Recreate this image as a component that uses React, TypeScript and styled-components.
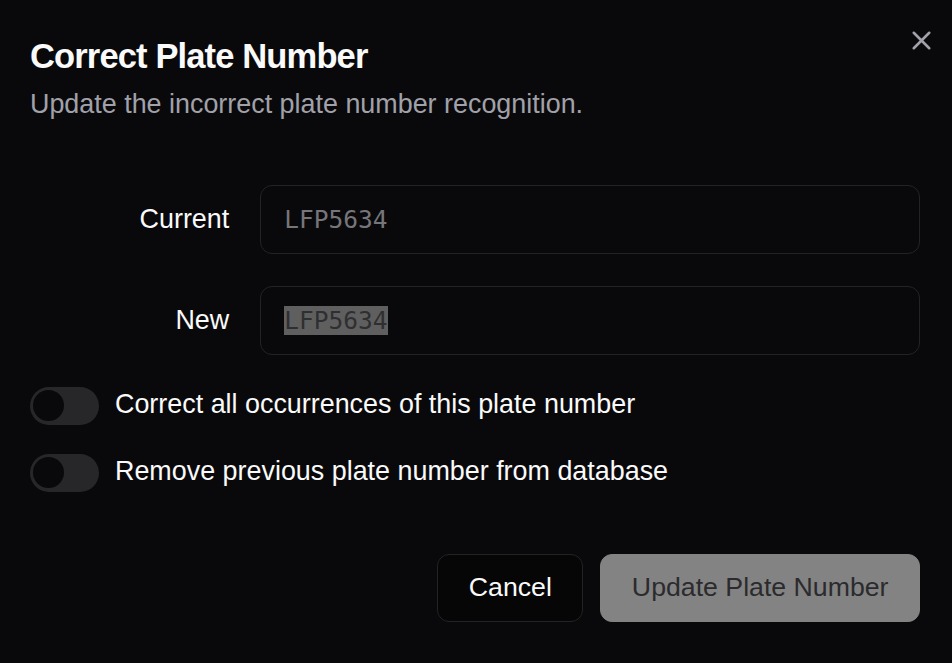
import { useEffect, useRef } from "react";
import styled, { createGlobalStyle } from "styled-components";
import { X } from "lucide-react";

const GlobalStyle = createGlobalStyle`
  html, body {
    margin: 0;
    padding: 0;
    background: #09090b;
  }
  body {
    font-family: "Liberation Sans", Arial, sans-serif;
    color: #fafafa;
  }
  * {
    box-sizing: border-box;
  }
`;

const Dialog = styled.div`
  position: relative;
  width: 952px;
  height: 663px;
  background: #09090b;
  padding: 39px 32px 0 30px;
  display: flex;
  flex-direction: column;
`;

const CloseButton = styled.button`
  position: absolute;
  top: 24px;
  right: 15px;
  width: 32px;
  height: 32px;
  padding: 0;
  border: none;
  background: transparent;
  color: #a1a1aa;
  display: flex;
  align-items: center;
  justify-content: center;
  cursor: pointer;
`;

const Header = styled.div`
  display: flex;
  flex-direction: column;
  gap: 11px;
`;

const Title = styled.h2`
  margin: 0;
  font-size: 34.5px;
  line-height: 1;
  font-weight: 700;
  letter-spacing: -0.86px;
  color: #fafafa;
`;

const Description = styled.p`
  margin: 0;
  font-size: 26.9px;
  line-height: 38.4px;
  color: #a1a1aa;
`;

const Form = styled.div`
  display: flex;
  flex-direction: column;
  gap: 32px;
  padding: 62px 0 0;
`;

const FieldRow = styled.div`
  display: grid;
  grid-template-columns: repeat(4, 1fr);
  column-gap: 31px;
  align-items: center;
`;

const Label = styled.label`
  text-align: right;
  font-size: 26.9px;
  line-height: 1;
  color: #fafafa;
`;

const Input = styled.input<{ $dim?: boolean }>`
  grid-column: span 3;
  height: 69px;
  width: 100%;
  border: 1.5px solid #232326;
  border-radius: 12px;
  background: transparent;
  padding: 0 23px;
  font-family: "DejaVu Sans Mono", "Liberation Mono", monospace;
  font-size: 24.5px;
  color: ${({ $dim }) => ($dim ? "#76767a" : "#3a3a3c")};
  outline: none;
  caret-color: #09090b;

  &::selection {
    background: #5f5f5f;
    color: #2f2f31;
  }
`;

const ToggleList = styled.div`
  display: flex;
  flex-direction: column;
  gap: 29px;
`;

const ToggleRow = styled.div`
  display: flex;
  align-items: center;
  gap: 16px;
  height: 38px;
`;

const Track = styled.button<{ $on?: boolean }>`
  width: 69px;
  height: 38px;
  padding: 0;
  border: 3.5px solid transparent;
  border-radius: 999px;
  background: ${({ $on }) => ($on ? "#fafafa" : "#27272a")};
  display: flex;
  align-items: center;
  justify-content: ${({ $on }) => ($on ? "flex-end" : "flex-start")};
  cursor: pointer;
`;

const Thumb = styled.span`
  width: 31px;
  height: 31px;
  border-radius: 50%;
  background: #09090b;
`;

const ToggleLabel = styled.span`
  font-size: 26.9px;
  line-height: 38.4px;
  margin-top: -3px;
  color: #fafafa;
`;

const Footer = styled.div`
  display: flex;
  justify-content: flex-end;
  gap: 17px;
  padding-top: 62px;
`;

const Button = styled.button<{ $variant: "outline" | "primary" }>`
  height: 68px;
  padding: 0 30.5px;
  border-radius: 12px;
  font-family: "Liberation Sans", Arial, sans-serif;
  font-size: 26.7px;
  cursor: pointer;
  border: 1.5px solid
    ${({ $variant }) => ($variant === "outline" ? "#232326" : "#838384")};
  background: ${({ $variant }) =>
    $variant === "outline" ? "#060607" : "#838384"};
  color: ${({ $variant }) => ($variant === "outline" ? "#fafafa" : "#2b2b2d")};
`;

const toggles = [
  "Correct all occurrences of this plate number",
  "Remove previous plate number from database",
];

export default function App() {
  const newRef = useRef<HTMLInputElement>(null);

  useEffect(() => {
    if (newRef.current) {
      newRef.current.focus();
      newRef.current.select();
    }
  }, []);

  return (
    <>
      <GlobalStyle />
      <Dialog>
        <CloseButton aria-label="Close">
          <X size={31} strokeWidth={2} />
        </CloseButton>
        <Header>
          <Title>Correct Plate Number</Title>
          <Description>Update the incorrect plate number recognition.</Description>
        </Header>
        <Form>
          <FieldRow>
            <Label>Current</Label>
            <Input $dim readOnly value="LFP5634" />
          </FieldRow>
          <FieldRow>
            <Label>New</Label>
            <Input ref={newRef} defaultValue="LFP5634" />
          </FieldRow>
          <ToggleList>
            {toggles.map((t) => (
              <ToggleRow key={t}>
                <Track role="switch" aria-checked={false}>
                  <Thumb />
                </Track>
                <ToggleLabel>{t}</ToggleLabel>
              </ToggleRow>
            ))}
          </ToggleList>
        </Form>
        <Footer>
          <Button $variant="outline">Cancel</Button>
          <Button $variant="primary" disabled>
            Update Plate Number
          </Button>
        </Footer>
      </Dialog>
    </>
  );
}
